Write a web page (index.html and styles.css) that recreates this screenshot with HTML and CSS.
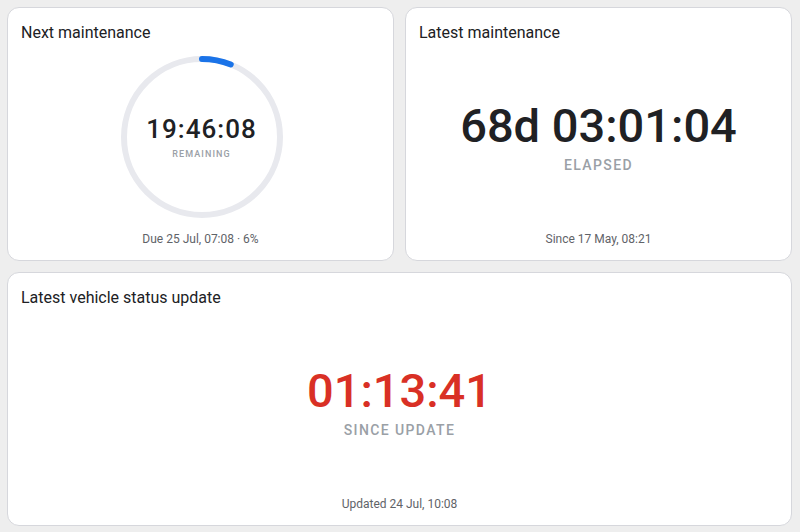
FILE: index.html
```html
<!DOCTYPE html>
<html lang="en">
<head>
    <meta charset="UTF-8">
    <meta name="viewport" content="width=device-width, initial-scale=1.0">
    <title>Vehicle Timers</title>
    <link rel="stylesheet" href="styles.css">
</head>
<body>
    <div id="board">
        <div class="card">
            <div class="card-title">Next maintenance</div>
            <div class="card-body">
                <div class="ring">
                    <svg width="162" height="162" viewBox="0 0 162 162">
                        <circle cx="81" cy="81" r="78" fill="none" stroke="#e8e9ee" stroke-width="6"/>
                        <circle cx="81" cy="81" r="78" fill="none" stroke="#1a73e8" stroke-width="6"
                            stroke-linecap="round" stroke-dasharray="29.4 460" transform="rotate(-90 81 81)"/>
                    </svg>
                    <div class="ring-text">
                        <div class="ring-value">19:46:08</div>
                        <div class="ring-label">REMAINING</div>
                    </div>
                </div>
            </div>
            <div class="card-foot">Due 25 Jul, 07:08 · 6%</div>
        </div>

        <div class="card">
            <div class="card-title">Latest maintenance</div>
            <div class="card-body">
                <div class="big-value">68d 03:01:04</div>
                <div class="big-label">ELAPSED</div>
            </div>
            <div class="card-foot">Since 17 May, 08:21</div>
        </div>

        <div class="card wide">
            <div class="card-title">Latest vehicle status update</div>
            <div class="card-body">
                <div class="big-value late">01:13:41</div>
                <div class="big-label">SINCE UPDATE</div>
            </div>
            <div class="card-foot">Updated 24 Jul, 10:08</div>
        </div>
    </div>
</body>
</html>
```

FILE: styles.css
```css
html, body {
    margin: 0;
    height: 100%;
}
body {
    font-family: Roboto, "Noto Sans", Arial, sans-serif;
    background-color: #eeeeee;
    color: #202124;
}
#board {
    box-sizing: border-box;
    height: 100%;
    padding: 7px 8px 6px 7px;
    display: grid;
    grid-template-columns: 1fr 1fr;
    grid-template-rows: 1fr 1fr;
    gap: 11px;
}
.card {
    background: #fff;
    border: 1px solid #d6d7dc;
    border-radius: 12px;
    padding: 14px 13px 13px 13px;
    display: flex;
    flex-direction: column;
    min-height: 0;
}
.card.wide {
    grid-column: 1 / 3;
}
.card-title {
    font-size: 16px;
    line-height: 21px;
}
.card-body {
    flex: 1;
    display: flex;
    flex-direction: column;
    align-items: center;
    justify-content: center;
}
.card-foot {
    font-size: 12px;
    line-height: 16px;
    color: #5f6368;
    text-align: center;
}
.ring {
    position: relative;
    width: 162px;
    height: 162px;
    margin-left: 2px;
}
.ring svg {
    display: block;
}
.ring-text {
    position: absolute;
    inset: 0;
    display: flex;
    flex-direction: column;
    align-items: center;
    justify-content: center;
}
.ring-value {
    font-size: 26px;
    font-weight: 500;
    line-height: 30px;
    letter-spacing: 1px;
}
.ring-label {
    font-size: 9px;
    font-weight: 500;
    line-height: 11px;
    letter-spacing: 1.1px;
    color: #9aa0a6;
    margin-top: 5px;
}
.big-value {
    font-size: 47px;
    font-weight: 500;
    line-height: 48px;
}
.big-value.late {
    color: #d93025;
}
.big-label {
    font-size: 14px;
    font-weight: 500;
    line-height: 16px;
    letter-spacing: 1.4px;
    color: #9aa0a6;
    margin-top: 7px;
}
```
